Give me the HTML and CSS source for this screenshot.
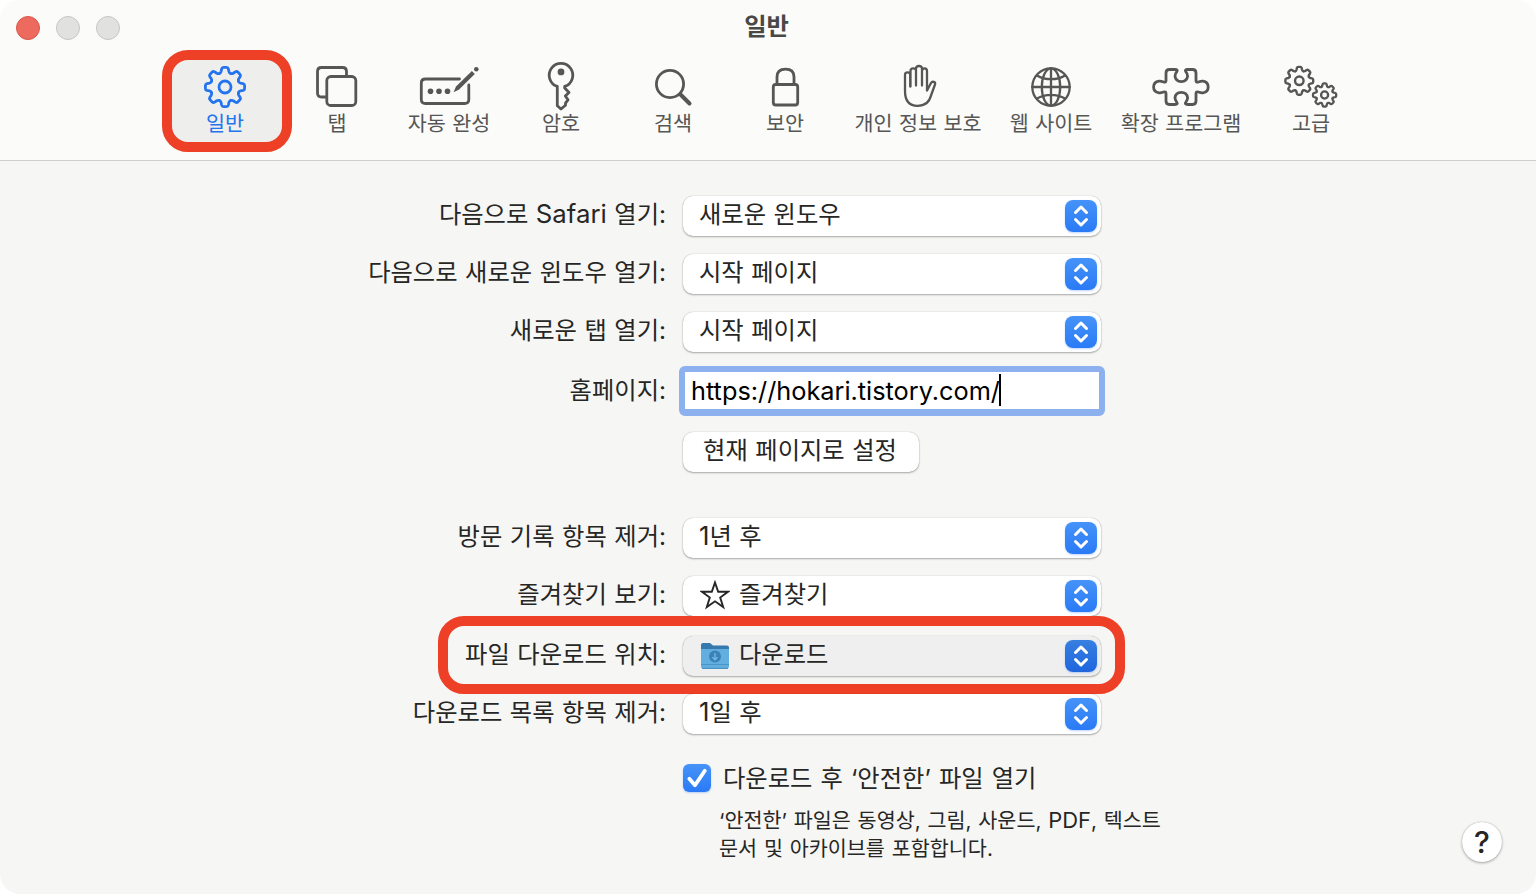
FILE: index.html
```html
<!DOCTYPE html>
<html lang="ko">
<head>
    <meta charset="UTF-8">
    <meta name="viewport" content="width=device-width, initial-scale=1.0">
    <title>일반</title>
    <link rel="stylesheet" href="styles.css">
</head>
<body>
    <!-- shared shapes -->
    <svg class="defs">
        <defs>
            <path id="tooth" d="M-5.6 -13.5Q-4.2 -14.2 -3.9 -15.5L-3.4 -18Q-3 -19.6 -1.5 -19.6H1.5Q3 -19.6 3.4 -18L3.9 -15.5Q4.2 -14.2 5.6 -13.5"/>
            <g id="gear">
                <use href="#tooth"/>
                <use href="#tooth" transform="rotate(45)"/>
                <use href="#tooth" transform="rotate(90)"/>
                <use href="#tooth" transform="rotate(135)"/>
                <use href="#tooth" transform="rotate(180)"/>
                <use href="#tooth" transform="rotate(225)"/>
                <use href="#tooth" transform="rotate(270)"/>
                <use href="#tooth" transform="rotate(315)"/>
                <circle r="6"/>
            </g>
            <path id="arrows" d="M10.5 12.5L16 7L21.5 12.5M10.5 19.5L16 25L21.5 19.5"/>
        </defs>
    </svg>

    <div class="window">
        <header class="toolbar">
            <div class="lights">
                <span class="light close"></span>
                <span class="light"></span>
                <span class="light"></span>
            </div>
            <h1 class="title">일반</h1>
            <nav class="tabs">
                <div class="tab active">
                    <svg class="icon" viewBox="0 0 64 52"><use href="#gear" transform="translate(32 27)"/></svg>
                    <span>일반</span>
                    <div class="mark mark-tab"></div>
                </div>
                <div class="tab">
                    <svg class="icon" viewBox="0 0 64 52">
                        <path d="M21 37H16.5Q12.5 37 12.5 33V11.5Q12.5 7.5 16.5 7.5H37.5Q41.5 7.5 41.5 11.5V16"/>
                        <rect x="21.8" y="16.5" width="29" height="29" rx="4"/>
                    </svg>
                    <span>탭</span>
                </div>
                <div class="tab">
                    <svg class="icon" viewBox="0 0 64 52">
                        <path d="M42.5 19H8.5Q4.3 19 4.3 23V39.5Q4.3 43.5 8.5 43.5H47.5Q51.8 43.5 51.8 39.5V25"/>
                        <g class="solid">
                            <circle cx="13.5" cy="31.3" r="2.8"/>
                            <circle cx="22" cy="31.3" r="2.8"/>
                            <circle cx="30.5" cy="31.3" r="2.8"/>
                            <path d="M36.5 32.2L39 26.4L54.9 10.9L57.8 13.9L41.8 29.7Z"/>
                            <circle cx="59.3" cy="9.2" r="2.3"/>
                        </g>
                    </svg>
                    <span>자동 완성</span>
                </div>
                <div class="tab">
                    <svg class="icon" viewBox="0 0 64 52">
                        <path d="M28.3 26.4A11.8 11.8 0 1 1 35.7 26.4V28L40 32.4L36.3 36L39 39.8L36.5 43.2V45.2L32 49L28.3 45.7Z"/>
                        <circle class="solid" cx="32" cy="11.9" r="3.4"/>
                    </svg>
                    <span>암호</span>
                </div>
                <div class="tab">
                    <svg class="icon" viewBox="0 0 64 52">
                        <circle cx="29" cy="24" r="13.6"/>
                        <path class="thick" d="M39.5 34.5L48.5 43.5"/>
                    </svg>
                    <span>검색</span>
                </div>
                <div class="tab">
                    <svg class="icon" viewBox="0 0 64 52">
                        <rect x="20.3" y="24.5" width="24.4" height="20.5" rx="2.5"/>
                        <path d="M24 24V17Q24 9.2 32.5 9.2T41 17V24"/>
                    </svg>
                    <span>보안</span>
                </div>
                <div class="tab privacy">
                    <svg class="icon hand" viewBox="0 0 64 52">
                        <path d="M24.2 26.5V14.5Q24 12.3 21.5 12.3T19 14.8V31Q19 45.8 31.5 45.8Q42.5 45.8 45 35.5L49 24.5Q49.6 22.5 47.8 21.9T45 23L41 30.5V11Q41 8.3 38.5 8.3T36 11V25.5M30 25.5V10.5Q29.8 8.3 27.2 8.3T24.5 10.8V26.5M30 11V8.5Q30.2 6 33 6T36 8.5V11"/>
                    </svg>
                    <span>개인 정보 보호</span>
                </div>
                <div class="tab">
                    <svg class="icon globe" viewBox="0 0 64 52">
                        <circle cx="32" cy="27" r="18.7"/>
                        <ellipse cx="32" cy="27" rx="9.2" ry="18.7"/>
                        <path d="M32 8.3V45.7M13.3 27H50.7M18 15.5Q24 19.2 32 19.2T46 15.5M18 38.5Q24 34.8 32 34.8T46 38.5"/>
                    </svg>
                    <span>웹 사이트</span>
                </div>
                <div class="tab extensions">
                    <svg class="icon" viewBox="0 0 64 52">
                        <path d="M26 9.5H20.5Q17 9.5 17 13V20.5Q17 22.8 14.5 22Q12 21 10 21.2Q4.6 22 4.6 27T10 32.8Q12 33 14.5 32Q17 31.2 17 33.5V41Q17 44.5 20.5 44.5H26Q29.3 44.5 27.8 42.3Q26 40 26 37.8Q26.6 32.4 32.3 32.4T38.6 37.8Q38.6 40 36.8 42.3Q35.3 44.5 38.6 44.5H43.5Q47 44.5 47 41V33.5Q47 31.2 49.5 32Q52 33 54 32.8Q59.2 32 59.2 27T54 21.2Q52 21 49.5 22Q47 22.8 47 20.5V13Q47 9.5 43.5 9.5H38.6Q35.3 9.5 36.8 11.7Q38.6 14 38.6 16.2Q38 21.6 32.3 21.6T26 16.2Q26 14 27.8 11.7Q29.3 9.5 26 9.5Z"/>
                    </svg>
                    <span>확장 프로그램</span>
                </div>
                <div class="tab">
                    <svg class="icon" viewBox="0 0 64 52">
                        <use class="gear-mid" href="#gear" transform="translate(20.3 20.8) scale(.71)"/>
                        <use class="gear-small" href="#gear" transform="translate(45.6 35) scale(.59)"/>
                    </svg>
                    <span>고급</span>
                </div>
            </nav>
        </header>

        <main class="form">
            <div class="row">
                <label>다음으로 <span class="latin">Safari</span> 열기:</label>
                <div class="select">새로운 윈도우<svg class="stepper" viewBox="0 0 32 32"><use href="#arrows"/></svg></div>
            </div>
            <div class="row">
                <label>다음으로 새로운 윈도우 열기:</label>
                <div class="select">시작 페이지<svg class="stepper" viewBox="0 0 32 32"><use href="#arrows"/></svg></div>
            </div>
            <div class="row">
                <label>새로운 탭 열기:</label>
                <div class="select">시작 페이지<svg class="stepper" viewBox="0 0 32 32"><use href="#arrows"/></svg></div>
            </div>
            <div class="row homepage">
                <label>홈페이지:</label>
                <div class="field"><span class="url">https://hokari.tistory.com/</span><span class="caret"></span></div>
            </div>
            <div class="row current">
                <label></label>
                <div class="button">현재 페이지로 설정</div>
            </div>
            <div class="row history">
                <label>방문 기록 항목 제거:</label>
                <div class="select"><span><span class="latin">1</span>년 후</span><svg class="stepper" viewBox="0 0 32 32"><use href="#arrows"/></svg></div>
            </div>
            <div class="row">
                <label>즐겨찾기 보기:</label>
                <div class="select">
                    <svg class="item-icon star" viewBox="0 0 30 30"><path d="M15 2.5L18.2 11.8H28L20.2 17.6L23.2 27L15 21.3L6.8 27L9.8 17.6L2 11.8H11.8Z"/></svg>
                    즐겨찾기<svg class="stepper" viewBox="0 0 32 32"><use href="#arrows"/></svg>
                </div>
            </div>
            <div class="row download">
                <label>파일 다운로드 위치:</label>
                <div class="select pressed">
                    <svg class="item-icon" viewBox="0 0 30 30">
                        <path fill="#3579ad" d="M1 5Q1 3 3 3H10L13 5.5H27Q29 5.5 29 7.5V14H1Z"/>
                        <path fill="#62aede" d="M1 9H29V26.5Q29 28.5 27 28.5H3Q1 28.5 1 26.5Z"/>
                        <path fill="#4a94c6" d="M1 24H29V25H1ZM2 27.8H28V29H2Z"/>
                        <circle cx="15" cy="16.5" r="6" fill="#3b83b6"/>
                        <path d="M15 13V19.5M12.4 17.2L15 19.7L17.6 17.2" fill="none" stroke="#70b9e6" stroke-width="1.4"/>
                    </svg>
                    다운로드<svg class="stepper" viewBox="0 0 32 32"><use href="#arrows"/></svg>
                </div>
                <div class="mark mark-row"></div>
            </div>
            <div class="row">
                <label>다운로드 목록 항목 제거:</label>
                <div class="select"><span><span class="latin">1</span>일 후</span><svg class="stepper" viewBox="0 0 32 32"><use href="#arrows"/></svg></div>
            </div>
            <div class="safe">
                <svg class="checkbox" viewBox="0 0 28 28"><path d="M6.3 14.8L12 21.2L21.8 6.8"/></svg>
                <span>다운로드 후 ‘안전한’ 파일 열기</span>
            </div>
            <p class="note">‘안전한’ 파일은 동영상, 그림, 사운드, <span class="latin">PDF</span>, 텍스트<br>문서 및 아카이브를 포함합니다.</p>
        </main>
        <div class="help">?</div>
    </div>
</body>
</html>
```
FILE: styles.css
```css
*{
    box-sizing: border-box;
}
body{
    margin: 0;
    background: #fff;
    font-family: Inter, 'Noto Sans CJK KR', sans-serif;
    font-size: 24.3px;
    word-spacing: .7px;
    color: #262625;
}
.defs{
    position: absolute;
    width: 0;
    height: 0;
}
.window{
    position: relative;
    height: 894px;
    background: #f6f6f4;
    border-radius: 20px;
    overflow: hidden;
}
.latin{
    font-size: 1.06em;
}

/* toolbar */
.toolbar{
    position: relative;
    height: 161px;
    background: #fbfbf9;
    border-bottom: 1px solid #cfcfcd;
}
.lights{
    position: absolute;
    top: 16px;
    left: 16px;
    display: flex;
    gap: 16px;
}
.light{
    width: 24px;
    height: 24px;
    border-radius: 50%;
    background: #e1e1df;
    border: 1px solid #c5c5c3;
}
.close{
    background: #ed6a5f;
    border-color: #d9554a;
}
.title{
    margin: 0;
    padding: 9px 3px 0 0;
    height: 60px;
    line-height: 34px;
    font-size: 24.3px;
    font-weight: 700;
    text-align: center;
    color: #484847;
}
.tabs{
    display: flex;
    justify-content: center;
}
.tab{
    position: relative;
    width: 112px;
    height: 86px;
    display: flex;
    flex-direction: column;
    align-items: center;
    font-size: 20.7px;
    line-height: 24px;
    white-space: nowrap;
    color: #565655;
}
.privacy{
    width: 154px;
}
.extensions{
    width: 148px;
}
.active{
    color: #2474f0;
}
.icon{
    position: relative;
    z-index: 1;
    width: 64px;
    height: 52px;
    fill: none;
    stroke: currentColor;
    stroke-width: 2.8;
    stroke-linecap: round;
    stroke-linejoin: round;
}
.tab span{
    position: relative;
    z-index: 1;
}
.solid{
    fill: currentColor;
    stroke: none;
}
.thick{
    stroke-width: 4;
}
.hand, .globe{
    stroke-width: 2.3;
}
.gear-mid{
    stroke-width: 3.4;
}
.gear-small{
    stroke-width: 3.9;
}
.mark{
    position: absolute;
    border: 10px solid #ed4026;
    border-radius: 26px;
}
.mark-tab{
    top: -10px;
    left: -7px;
    width: 130px;
    height: 102px;
    background: #eeeeec;
}

/* settings */
.form{
    padding-top: 35px;
}
.row{
    position: relative;
    display: flex;
    align-items: center;
    gap: 17px;
    height: 40px;
    margin-bottom: 18px;
}
.row label{
    width: 666px;
    padding-bottom: 4px;
    line-height: 36px;
    text-align: right;
}
.select, .button{
    display: flex;
    align-items: center;
    height: 40px;
    padding: 0 4px 4px 16px;
    line-height: 36px;
    background: #fff;
    border-radius: 10px;
    box-shadow: 0 0 1px rgba(0, 0, 0, .3), 0 1px 2px rgba(0, 0, 0, .3);
}
.select{
    width: 418px;
}
.pressed{
    background: #efefef;
}
.stepper{
    width: 32px;
    height: 32px;
    margin-left: auto;
    position: relative;
    top: 2px;
    border-radius: 8px;
    background: linear-gradient(#4693f8, #2a7af6);
    box-shadow: 0 1px 2px rgba(40, 120, 246, .3);
    fill: none;
    stroke: #fff;
    stroke-width: 3;
    stroke-linecap: round;
    stroke-linejoin: round;
}
.pressed .stepper{
    background: linear-gradient(#377fe0, #1f66de);
}
.item-icon{
    width: 30px;
    height: 30px;
    margin: 2px 9px 0 1px;
}
.star{
    fill: none;
    stroke: #262625;
    stroke-width: 1.9;
}
.homepage{
    height: 50px;
    margin: -4px 0 16px;
    gap: 13px;
}
.homepage label{
    padding-bottom: 2px;
}
.field{
    width: 426px;
    height: 50px;
    padding-left: 6px;
    display: flex;
    align-items: center;
    background: #fff;
    border: 6px solid #8db0ef;
    border-bottom-width: 7px;
    border-radius: 6px;
    color: #000;
}
.url{
    font-size: 25.3px;
}
.caret{
    width: 2px;
    height: 32px;
    margin: -1px 0 0 -1px;
    background: #000;
}
.current{
    margin-bottom: 46px;
}
.button{
    width: 236px;
    padding: 0 2px 4px 0;
    justify-content: center;
}
.download{
    margin-top: 20px;
}
.mark-row{
    top: -20px;
    left: 438px;
    width: 687px;
    height: 78px;
}
.safe{
    display: flex;
    align-items: center;
    gap: 12px;
    height: 28px;
    margin: 30px 0 0 683px;
    word-spacing: 1.3px;
}
.safe span{
    padding-bottom: 4px;
}
.checkbox{
    width: 28px;
    height: 28px;
    border-radius: 6px;
    background: linear-gradient(#4693f8, #2a7af6);
    box-shadow: 0 1px 2px rgba(40, 120, 246, .3);
    fill: none;
    stroke: #fff;
    stroke-width: 3.8;
    stroke-linecap: round;
    stroke-linejoin: round;
}
.note{
    margin: 14px 0 0 719px;
    font-size: 20.7px;
    line-height: 28px;
    word-spacing: 1px;
}
.help{
    position: absolute;
    right: 34px;
    bottom: 32px;
    width: 40px;
    height: 40px;
    border-radius: 50%;
    background: #fff;
    box-shadow: 0 0 1px rgba(0, 0, 0, .3), 0 1px 3px rgba(0, 0, 0, .3);
    font-size: 30px;
    font-weight: 500;
    line-height: 40px;
    text-align: center;
}
```
